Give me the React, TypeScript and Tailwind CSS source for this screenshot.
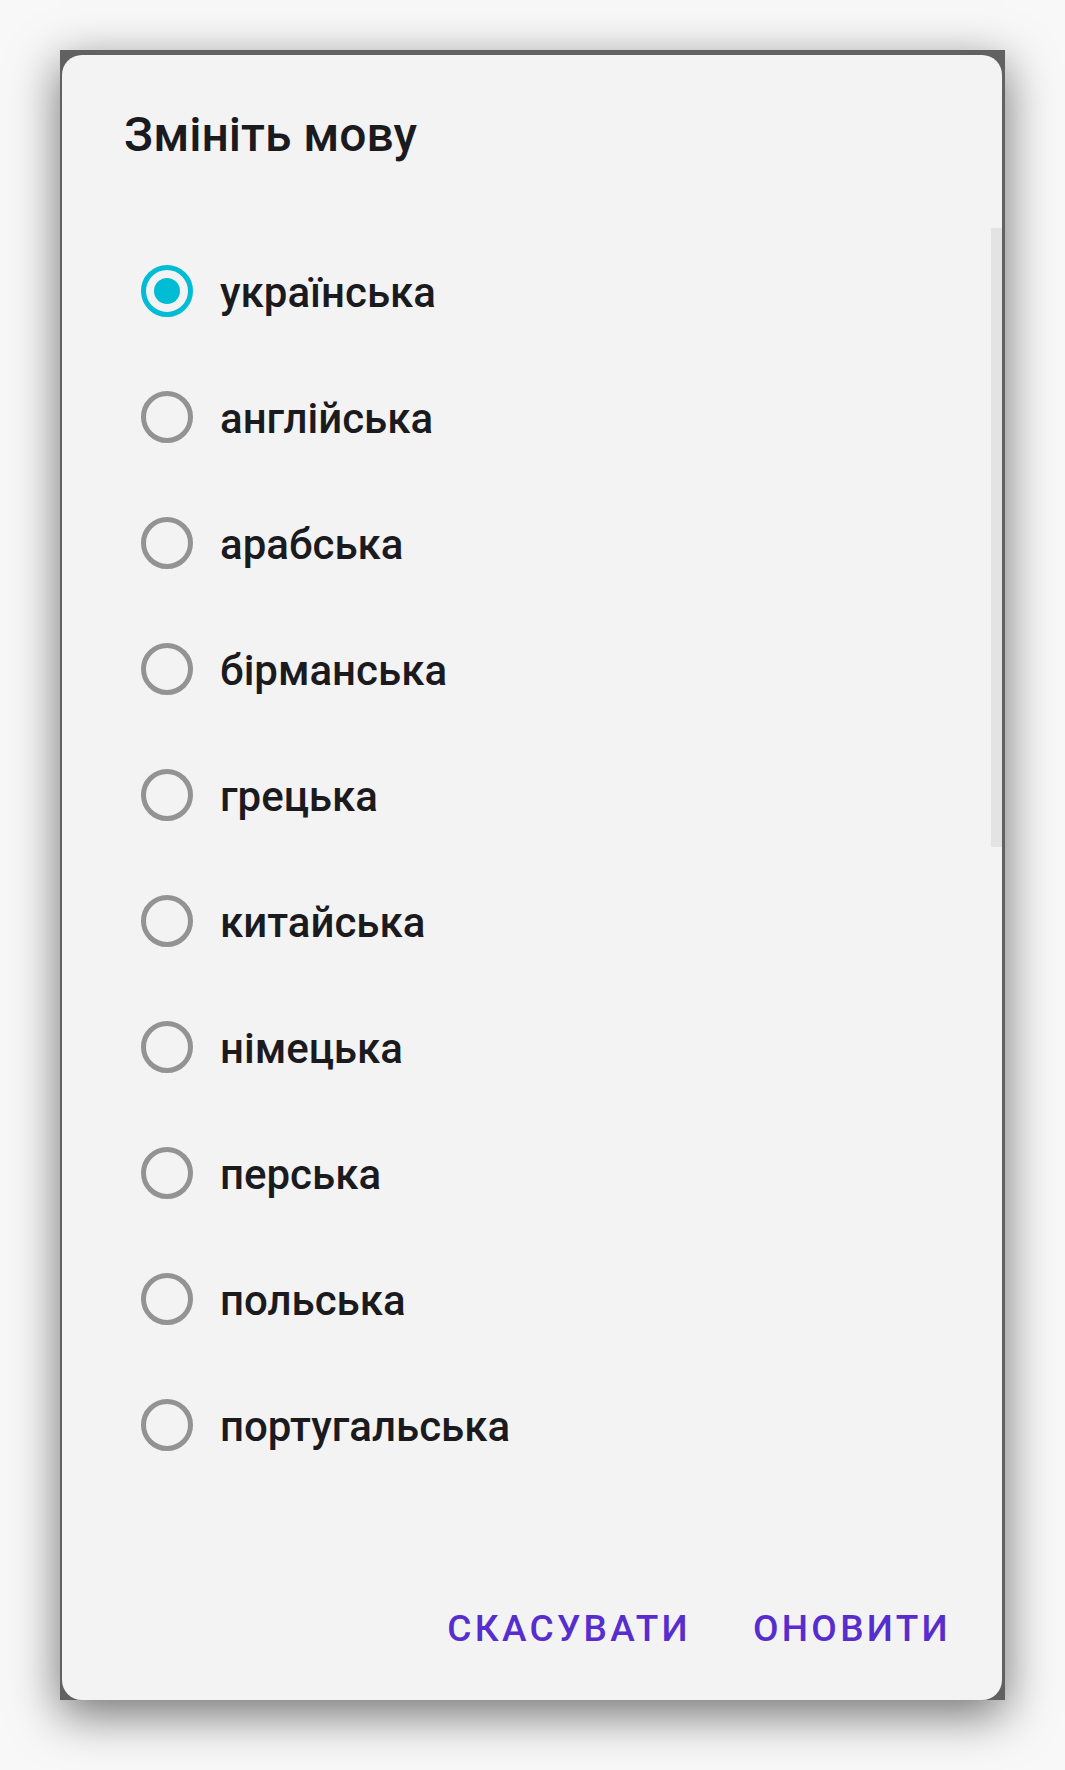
import { useState } from "react";

const languages = [
  "українська",
  "англійська",
  "арабська",
  "бірманська",
  "грецька",
  "китайська",
  "німецька",
  "перська",
  "польська",
  "португальська",
];

function Radio({ checked }: { checked: boolean }) {
  return (
    <div
      className={`flex h-[52px] w-[52px] shrink-0 items-center justify-center rounded-full border-[5px] ${
        checked ? "border-[#00bcd4]" : "border-[#939393]"
      }`}
    >
      {checked && <div className="h-[26px] w-[26px] rounded-full bg-[#00bcd4]" />}
    </div>
  );
}

export default function App() {
  const [selected, setSelected] = useState(0);

  return (
    <div className="h-[1770px] w-full overflow-hidden bg-[#f8f8f8] pl-[60px] pt-[50px] font-['Roboto','Noto_Sans',sans-serif]">
      {/* dimmed app behind the dialog */}
      <div className="h-[1650px] w-[945px] bg-[#616161] pl-[2px] pr-[3px] pt-[5px] shadow-[0_14px_45px_rgba(0,0,0,0.55)]">
        <div className="relative flex h-full flex-col rounded-[20px] bg-[#f3f3f3]">
          {/* scroll indicator */}
          <div className="absolute right-0 top-[173px] h-[619px] w-[11px] bg-[#e3e3e3]" />

          <div className="h-[173px] pl-[62px] pt-[52px]">
            <h2 className="text-[48px] font-medium leading-[56px] text-[#1b1b1f]">Змініть мову</h2>
          </div>

          <ul className="flex flex-col">
            {languages.map((lang, i) => (
              <li
                key={lang}
                onClick={() => setSelected(i)}
                className="flex h-[126px] cursor-pointer items-center gap-[27px] pl-[79px]"
              >
                <Radio checked={selected === i} />
                <span className="mt-[3px] text-[42px] font-medium leading-[52px] text-[#1b1b1f]">{lang}</span>
              </li>
            ))}
          </ul>

          <div className="mt-auto flex justify-end gap-[62px] pb-[49px] pr-[51px]">
            <button className="text-[37px] font-medium uppercase leading-[44px] tracking-[3.3px] text-[#582dce]">
              Скасувати
            </button>
            <button className="text-[37px] font-medium uppercase leading-[44px] tracking-[3.3px] text-[#582dce]">
              Оновити
            </button>
          </div>
        </div>
      </div>
    </div>
  );
}
